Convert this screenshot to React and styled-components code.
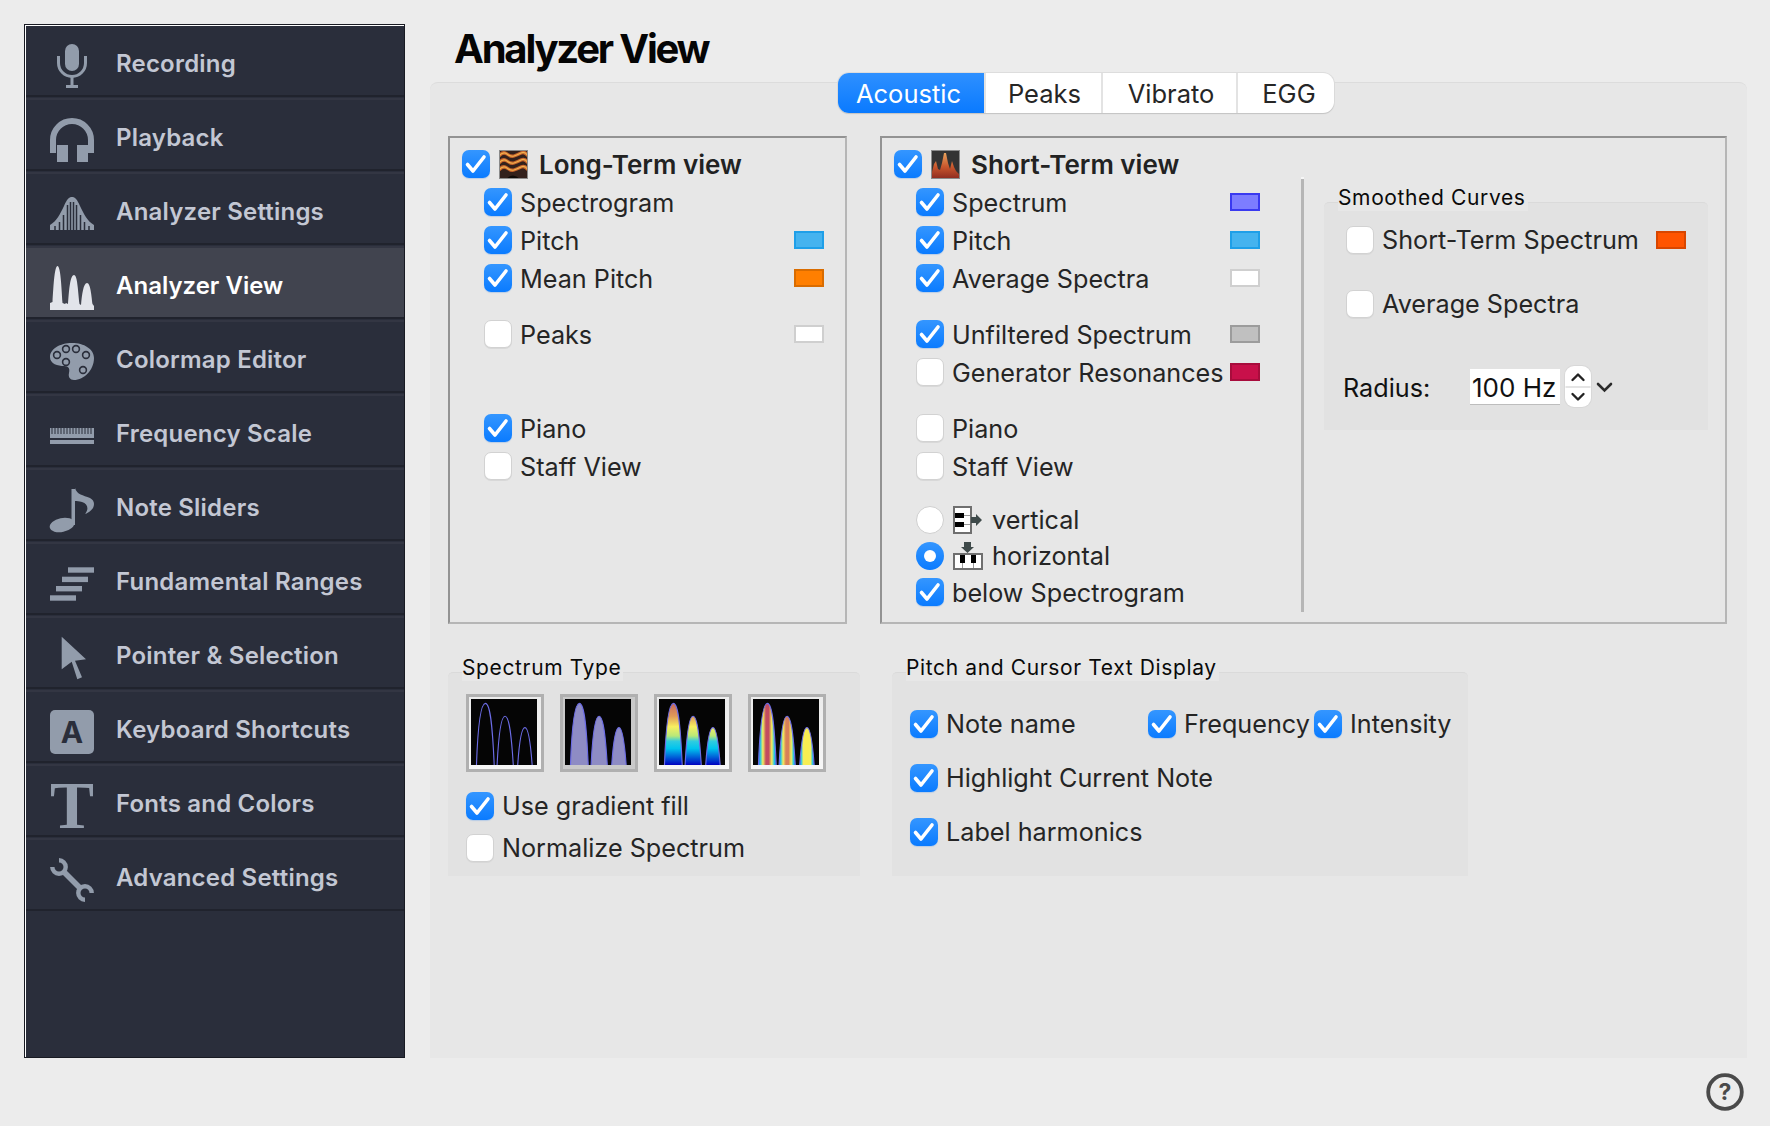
import React from "react";
import styled, { createGlobalStyle } from "styled-components";

const GlobalStyle = createGlobalStyle`
  html, body {
    margin: 0;
    padding: 0;
    background: #ececec;
  }
  body {
    font-family: "Inter", "Liberation Sans", sans-serif;
    color: #232323;
  }
`;

const MicIcon = () => (
  <svg viewBox="0 0 44 44">
    <rect x="15" y="0" width="14" height="27" rx="7" />
    <path d="M8.5 12v7a13.5 13.5 0 0 0 27 0v-7" fill="none" stroke="currentColor" strokeWidth="3" />
    <rect x="20.5" y="32" width="3" height="9" />
    <rect x="16" y="41" width="12" height="3" />
  </svg>
);

const HeadphonesIcon = () => (
  <svg viewBox="0 0 44 44">
    <path d="M3 35V22a19 19 0 0 1 38 0v13" fill="none" stroke="currentColor" strokeWidth="6" />
    <rect x="7" y="27" width="11" height="17" />
    <rect x="27" y="27" width="11" height="17" />
  </svg>
);

const BellIcon = () => (
  <svg viewBox="0 0 44 44">
    <path d="M0 38V33C7 29 10 22 14 14C17 7 19 5 22 5C25 5 27 7 30 14C34 22 37 29 44 33V38Z" />
    <path
      d="M17.5 13V38M20.5 10V38M23.5 10V38M26.5 13V38M13.500 23V38M30.500 23V38M9.500 30V38M34.500 30V38M5 34V38M39 34V38"
      fill="none"
      stroke="#2a2e3b"
      strokeWidth="1.5"
    />
  </svg>
);

const PeaksIcon = () => (
  <svg viewBox="0 0 44 44">
    <path d="M0 44V37L2.500 36C3.500 20 4.500 0 7.500 0C10.500 0 11.500 20 12.500 37L15 38L16 37L18 38C19 25 20 9 24 9C27.500 9 28 25 29.500 38L31 39C32 28 33.500 17 37 17C40.500 17 41.500 30 42.500 38L44 40V44Z" />
  </svg>
);

const PaletteIcon = () => (
  <svg viewBox="0 0 44 44">
    <path d="M22 3C10 3 0 9 0 17C0 24 8 26 14 26C19 26 20 29 19 33C18 37 20 40 24 40C34 40 44 30 44 18C44 9 34 3 22 3Z" />
    {[
      [7, 15],
      [16, 9],
      [26, 9],
      [36, 15],
      [16, 22],
      [33, 30],
    ].map(([cx, cy]) => (
      <circle key={cx + "-" + cy} cx={cx} cy={cy} r="3.4" stroke="#2a2e3b" strokeWidth="1.6" />
    ))}
  </svg>
);

const RulerIcon = () => (
  <svg viewBox="0 0 44 44">
    <rect x="0" y="14" width="44" height="10" />
    <rect x="0" y="26" width="44" height="4" />
    <path
      d="M2 14V20M5 14V20M8 14V20M11 14V20M14 14V20M17 14V20M20 14V20M23 14V20M26 14V20M29 14V20M32 14V20M35 14V20M38 14V20M41 14V20"
      fill="none"
      stroke="#2a2e3b"
      strokeWidth="1"
    />
  </svg>
);

const NoteIcon = () => (
  <svg viewBox="0 0 44 44">
    <ellipse cx="12" cy="37" rx="12.5" ry="7" transform="rotate(-12 12 37)" />
    <rect x="21.5" y="1" width="3.5" height="36" />
    <path d="M25 0C27 7 33 7 40 10C44 12 45 16 43 20C41 23 38 25 35 26C39 21 38 16 32 14C29 13 27 13 25 13Z" />
  </svg>
);

const RangesIcon = () => (
  <svg viewBox="0 0 44 44">
    <rect x="18" y="5.3" width="26" height="5.4" />
    <rect x="12" y="14.7" width="26" height="5.4" />
    <rect x="6" y="24" width="26" height="5.4" />
    <rect x="0" y="33.3" width="26" height="5.4" />
  </svg>
);

const PointerIcon = () => (
  <svg viewBox="0 0 44 44">
    <polygon points="11.7,0.7 11.7,33.3 21.7,25.7 27.3,43.3 32,41.3 25,24.7 36,23.3" />
  </svg>
);

const KeyIcon = () => (
  <svg viewBox="0 0 44 44">
    <rect width="44" height="44" rx="5" />
    <text x="22" y="33" textAnchor="middle" fontFamily="Inter" fontWeight="700" fontSize="30" fill="#2a2e3b">
      A
    </text>
  </svg>
);

const SerifIcon = () => (
  <svg viewBox="0 0 44 44">
    <text x="22" y="44" textAnchor="middle" fontFamily="Liberation Serif" fontWeight="700" fontSize="67" textLength="44" lengthAdjust="spacingAndGlyphs">
      T
    </text>
  </svg>
);

const WrenchIcon = () => (
  <svg viewBox="0 0 44 44" stroke="currentColor" strokeWidth="4.4">
    <path d="M9 2.300A6.700 6.700 0 1 1 2.300 9" fill="none" />
    <path d="M14.500 14.500L29.500 29.500" fill="none" strokeWidth="5.600" />
    <path d="M35 41.700A6.700 6.700 0 1 1 41.700 35" fill="none" />
  </svg>
);

const navItems = [
  { label: "Recording", Icon: MicIcon },
  { label: "Playback", Icon: HeadphonesIcon },
  { label: "Analyzer Settings", Icon: BellIcon },
  { label: "Analyzer View", Icon: PeaksIcon, active: true },
  { label: "Colormap Editor", Icon: PaletteIcon },
  { label: "Frequency Scale", Icon: RulerIcon },
  { label: "Note Sliders", Icon: NoteIcon },
  { label: "Fundamental Ranges", Icon: RangesIcon },
  { label: "Pointer & Selection", Icon: PointerIcon },
  { label: "Keyboard Shortcuts", Icon: KeyIcon },
  { label: "Fonts and Colors", Icon: SerifIcon },
  { label: "Advanced Settings", Icon: WrenchIcon },
];

const peakPaths = [
  "M5.3 64C6.5 30 9 4.3 14 4.3C19 4.3 21 30 22.5 64",
  "M25.3 64C26.5 40 28.5 16.7 33 16.7C37.5 16.7 39.5 40 41 64",
  "M45.3 64C46.5 46 48.5 27.7 52.3 27.7C56 27.7 58 46 59.3 64",
];

const edgeStops = (core) => (
  <>
    <stop offset="0" stopColor="#2f6fe0" />
    <stop offset="0.1" stopColor="#22c4ea" />
    <stop offset="0.25" stopColor="#f5ee5c" />
    <stop offset="0.42" stopColor={core} />
    <stop offset="0.58" stopColor={core} />
    <stop offset="0.75" stopColor="#f5ee5c" />
    <stop offset="0.9" stopColor="#22c4ea" />
    <stop offset="1" stopColor="#2f6fe0" />
  </>
);

const Thumb = ({ kind }) => (
  <ThumbSvg viewBox="0 0 64 64">
    <defs>
      <linearGradient id="jet" gradientUnits="userSpaceOnUse" x1="0" y1="64" x2="0" y2="0">
        <stop offset="0" stopColor="#0000c0" />
        <stop offset="0.12" stopColor="#0060d8" />
        <stop offset="0.25" stopColor="#00c4ee" />
        <stop offset="0.36" stopColor="#30cce0" />
        <stop offset="0.44" stopColor="#b8e878" />
        <stop offset="0.58" stopColor="#f8f060" />
        <stop offset="0.74" stopColor="#e09a58" />
        <stop offset="1" stopColor="#c05860" />
      </linearGradient>
      <linearGradient id="core0">{edgeStops("#c24c60")}</linearGradient>
      <linearGradient id="core1">{edgeStops("#d88058")}</linearGradient>
      <linearGradient id="core2">{edgeStops("#f8ee50")}</linearGradient>
    </defs>
    <rect width="64" height="64" fill="#050505" />
    {peakPaths.map((d, i) => {
      const fills = {
        line: "none",
        solid: "#8e8cc4",
        jet: "url(#jet)",
        core: `url(#core${i})`,
      };
      return <path key={d} d={d} fill={fills[kind]} stroke="#6c6ce6" strokeWidth="1.1" />;
    })}
  </ThumbSvg>
);

const Check = ({ on }) => (
  <CheckBox $on={on}>
    {on && (
      <svg viewBox="0 0 28 28" fill="none" stroke="#fff" strokeWidth="3.6" strokeLinecap="round" strokeLinejoin="round">
        <path d="M5.5 14.5L11 21L22 7" />
      </svg>
    )}
  </CheckBox>
);

const Option = ({ on, text, swatch, $top, indent = true }) => (
  <Row $top={$top} $indent={indent}>
    <Check on={on} />
    <RowText $nudge={indent}>{text}</RowText>
    {swatch && <Swatch $fill={swatch[0]} $edge={swatch[1]} />}
  </Row>
);

const App = () => (
  <Page>
    <GlobalStyle />
    <Sidebar>
      {navItems.map(({ label, Icon, active }, i) => (
        <NavItem key={label} $active={active} $first={i === 0}>
          <NavIcon $active={active}>
            <Icon />
          </NavIcon>
          <NavLabel $active={active}>{label}</NavLabel>
        </NavItem>
      ))}
    </Sidebar>

    <Content>
      <Title>Analyzer View</Title>
      <Panel>
        <Tabs>
          <Tab $active $w={146} $shift={-5}>Acoustic</Tab>
          <Tab $w={117} $shift={2}>Peaks</Tab>
          <Tab $w={135} $shift={3}>Vibrato</Tab>
          <Tab $w={98} $shift={6}>EGG</Tab>
        </Tabs>

        <TopRow>
          <Box>
            <ViewColumn>
              <HeadRow>
                <Check on />
                <HeadIcon viewBox="0 0 29 29">
                  <rect width="29" height="29" fill="#33211c" />
                  <path
                    d="M0 6Q4 1 8 4T15 6T22 3T29 6M0 13Q4 8 8 11T15 13T22 10T29 13M0 20Q4 15 8 18T15 20T22 17T29 20"
                    fill="none"
                    stroke="#c8642c"
                    strokeWidth="3.400"
                  />
                  <path
                    d="M0 6Q4 1 8 4T15 6T22 3T29 6M0 13Q4 8 8 11T15 13T22 10T29 13M0 20Q4 15 8 18T15 20T22 17T29 20"
                    fill="none"
                    stroke="#efb24e"
                    strokeWidth="1.200"
                  />
                  <path d="M7 29Q14 22 21 29Z" fill="#0e0a08" />
                  <rect x="0.5" y="0.5" width="28" height="28" fill="none" stroke="#8a8a8a" />
                </HeadIcon>
                <HeadText>Long-Term view</HeadText>
              </HeadRow>
              <Option on text="Spectrogram" />
              <Option on text="Pitch" swatch={["#45b3ef", "#1f9fe8"]} />
              <Option on text="Mean Pitch" swatch={["#ff7f00", "#d96c00"]} />
              <Option text="Peaks" $top={28} swatch={["#ffffff", "#cfcfcf"]} />
              <Option on text="Piano" $top={66} />
              <Option text="Staff View" />
            </ViewColumn>
          </Box>

          <WideBox>
            <ShortColumn>
              <HeadRow>
                <Check on />
                <HeadIcon viewBox="0 0 29 29">
                  <defs>
                    <linearGradient id="shortPeak" gradientUnits="userSpaceOnUse" x1="0" y1="29" x2="0" y2="2">
                      <stop offset="0" stopColor="#8c2a20" />
                      <stop offset="0.45" stopColor="#c8562c" />
                      <stop offset="1" stopColor="#eaa860" />
                    </linearGradient>
                  </defs>
                  <rect width="29" height="29" fill="#333333" />
                  <path d="M1 29V22L3 14L5 11L7 19L9 20L11 13L13 3H15L17 13L19 19L21 11L23 17L25 21L28 24V29Z" fill="url(#shortPeak)" />
                  <rect x="0.5" y="0.5" width="28" height="28" fill="none" stroke="#8a8a8a" />
                </HeadIcon>
                <HeadText>Short-Term view</HeadText>
              </HeadRow>
              <Option on text="Spectrum" swatch={["#7d7dff", "#3a3af0"]} />
              <Option on text="Pitch" swatch={["#45b3ef", "#1f9fe8"]} />
              <Option on text="Average Spectra" swatch={["#ffffff", "#cfcfcf"]} />
              <Option on text="Unfiltered Spectrum" $top={28} swatch={["#c0c0c0", "#9c9c9c"]} />
              <Option text="Generator Resonances" swatch={["#c8104a", "#a80c3c"]} />
              <Option text="Piano" $top={28} />
              <Option text="Staff View" />
              <Row $top={26} $indent>
                <Radio />
                <PianoIcon viewBox="0 0 30 28">
                  <rect x="1" y="1" width="17" height="26" fill="#fff" stroke="#6f6f6f" strokeWidth="2" />
                  <path d="M2 9.5H17M2 18.5H17" stroke="#9a9a9a" />
                  <rect x="2" y="7" width="9" height="5" fill="#000" />
                  <rect x="2" y="16" width="9" height="5" fill="#000" />
                  <path d="M18 11H23V8L29 14L23 20V17H18Z" fill="#3f4a4a" />
                </PianoIcon>
                <PianoText>vertical</PianoText>
              </Row>
              <Row $top={8} $indent>
                <Radio $on />
                <PianoIcon viewBox="0 0 30 28">
                  <rect x="1" y="12" width="28" height="15" fill="#fff" stroke="#6f6f6f" strokeWidth="2" />
                  <path d="M9.5 13V26M20.5 13V26" stroke="#9a9a9a" />
                  <rect x="7" y="13" width="5" height="8" fill="#000" />
                  <rect x="18" y="13" width="5" height="8" fill="#000" />
                  <path d="M11 0H18V5H21L14.500 11L8 5H11Z" fill="#3f4a4a" />
                </PianoIcon>
                <PianoText>horizontal</PianoText>
              </Row>
              <Option on text="below Spectrogram" $top={8} />
            </ShortColumn>
            <Divider />
            <SmoothedGroup>
              <Legend>Smoothed Curves</Legend>
              <Option text="Short-Term Spectrum" indent={false} $top={0} swatch={["#ff5400", "#d84600"]} />
              <Option text="Average Spectra" indent={false} $top={36} />
              <RadiusRow>
                <RadiusLabel>Radius:</RadiusLabel>
                <RadiusInput>100 Hz</RadiusInput>
                <Stepper>
                  <svg viewBox="0 0 26 41" fill="none" stroke="#222" strokeWidth="2.4" strokeLinecap="round" strokeLinejoin="round">
                    <path d="M7.500 14L13 8.500L18.500 14" />
                    <path d="M7.500 28L13 33.500L18.500 28" />
                    <path d="M1 21H25" stroke="#dcdcdc" strokeWidth="1.500" />
                  </svg>
                </Stepper>
                <Chevron viewBox="0 0 17 12">
                  <path d="M2 3L8.500 9.500L15 3" fill="none" stroke="#2b2b2b" strokeWidth="2.600" strokeLinecap="round" />
                </Chevron>
              </RadiusRow>
            </SmoothedGroup>
          </WideBox>
        </TopRow>

        <BottomRow>
          <TypeGroup>
            <Legend>Spectrum Type</Legend>
            <ThumbRow>
              {["line", "solid", "jet", "core"].map((kind) => (
                <ThumbButton key={kind} $selected={kind === "solid"}>
                  <Thumb kind={kind} />
                </ThumbButton>
              ))}
            </ThumbRow>
            <Option on text="Use gradient fill" indent={false} $top={20} />
            <Option text="Normalize Spectrum" indent={false} $top={14} />
          </TypeGroup>

          <CursorGroup>
            <Legend>Pitch and Cursor Text Display</Legend>
            <CursorGrid>
              <Option on text="Note name" indent={false} $top={0} />
              <Option on text="Frequency" indent={false} $top={0} />
              <Option on text="Intensity" indent={false} $top={0} />
            </CursorGrid>
            <Option on text="Highlight Current Note" indent={false} $top={26} />
            <Option on text="Label harmonics" indent={false} $top={26} />
          </CursorGroup>
        </BottomRow>
      </Panel>
      <HelpRow>
        <HelpIcon viewBox="0 0 38 38">
          <circle cx="19" cy="19" r="16.800" fill="none" stroke="#4a4a4a" strokeWidth="3.800" />
          <text x="19" y="27" textAnchor="middle" fontFamily="Inter" fontWeight="700" fontSize="23" fill="#4a4a4a">
            ?
          </text>
        </HelpIcon>
      </HelpRow>
    </Content>
  </Page>
);

export default App;

const Page = styled.div`
  width: 1770px;
  height: 1126px;
  box-sizing: border-box;
  display: flex;
  align-items: flex-start;
  gap: 25px;
  padding: 24px 23px 0 24px;
  overflow: hidden;
`;

const Sidebar = styled.nav`
  width: 381px;
  height: 1034px;
  flex: none;
  box-sizing: border-box;
  border: 1px solid #181a22;
  padding-left: 1px;
  background: #2a2e3b;
  box-shadow: inset 1px 1px 0 #fff;
`;

const NavItem = styled.div`
  height: 51px;
  display: flex;
  align-items: flex-start;
  gap: 23px;
  padding: 18px 0 0 24px;
  border-top: ${(p) => (p.$first ? "1px solid transparent" : "2px solid #333643")};
  border-bottom: 2px solid #20232d;
  margin-bottom: 1px;
  background: ${(p) => (p.$active ? "#41444f" : "transparent")};
  background-clip: padding-box;
`;

const NavIcon = styled.div`
  width: 44px;
  height: 44px;
  flex: none;
  color: ${(p) => (p.$active ? "#e2e4ea" : "#929cab")};

  svg {
    display: block;
    width: 44px;
    height: 44px;
    fill: currentColor;
    overflow: visible;
  }
`;

const NavLabel = styled.span`
  margin: 5px 0 0 -1px;
  font-size: 24px;
  line-height: 30px;
  font-weight: 600;
  letter-spacing: ${(p) => (p.$active ? "0" : "0.2px")};
  color: ${(p) => (p.$active ? "#fff" : "#c3c7d3")};
  white-space: nowrap;
`;

const Content = styled.main`
  flex: 1;
  min-width: 0;
  display: flex;
  flex-direction: column;
`;

const Title = styled.h1`
  height: 55px;
  margin: 0;
  padding: 3px 0 0 24px;
  font-size: 40px;
  line-height: 44px;
  font-weight: 700;
  letter-spacing: -2.2px;
  color: #050505;
`;

const Panel = styled.section`
  height: 976px;
  box-sizing: border-box;
  padding: 0 20px 0 18px;
  background: #e7e7e7;
  border-top: 1px solid #dcdcdc;
  border-radius: 8px 8px 0 0;
`;

const Tabs = styled.div`
  width: fit-content;
  height: 40px;
  box-sizing: border-box;
  display: flex;
  margin: -10px 0 0 390px;
  background: #fff;
  border-radius: 11px;
  box-shadow: 0 1px 1px #c4c4c4, 0 0 0 1px #dddddd;
  overflow: hidden;
`;

const Tab = styled.div`
  width: ${(p) => p.$w}px;
  box-sizing: border-box;
  display: flex;
  align-items: center;
  justify-content: center;
  padding: 0 ${(p) => (p.$shift < 0 ? -p.$shift : 0)}px 0 ${(p) => (p.$shift > 0 ? p.$shift : 0)}px;
  font-size: 25.5px;
  color: ${(p) => (p.$active ? "#fff" : "#262626")};
  background: ${(p) => (p.$active ? "linear-gradient(#2e90ff, #0a7aff)" : "transparent")};

  & + & {
    border-left: 2px solid #e3e3e3;
  }
  &:nth-child(2) {
    border-left: none;
  }
`;

const TopRow = styled.div`
  display: flex;
  gap: 33px;
  margin-top: 23px;
`;

const Box = styled.div`
  width: 399px;
  height: 488px;
  box-sizing: border-box;
  border-style: solid;
  border-width: 2px;
  border-color: #939393 #b6b6b6 #b6b6b6 #939393;
`;

const WideBox = styled(Box)`
  width: 847px;
  display: flex;
`;

const ViewColumn = styled.div`
  padding: 12px 21px 0 12px;
`;

const ShortColumn = styled.div`
  width: 419px;
  flex: none;
  box-sizing: border-box;
  padding: 12px 41px 0 12px;
`;

const Divider = styled.div`
  width: 3px;
  height: 435px;
  flex: none;
  margin-top: 39px;
  background: #b6b6b6;
  box-shadow: inset 0 2px 0 #f6f6f6;
`;

const HeadRow = styled.div`
  height: 28px;
  display: flex;
  align-items: center;
`;

const HeadIcon = styled.svg`
  width: 29px;
  height: 29px;
  margin-left: 9px;
  flex: none;
`;

const HeadText = styled.span`
  margin-left: 11px;
  font-size: 26px;
  font-weight: 600;
  color: #222;
  white-space: nowrap;
`;

const Row = styled.div`
  height: 28px;
  display: flex;
  align-items: center;
  margin-top: ${(p) => (p.$top === undefined ? 10 : p.$top)}px;
  margin-left: ${(p) => (p.$indent ? 22 : 0)}px;
`;

const RowText = styled.span`
  margin-left: 8px;
  padding-top: ${(p) => (p.$nudge ? 2 : 0)}px;
  font-size: 25.2px;
  color: #252525;
  white-space: nowrap;
`;

const CheckBox = styled.span`
  width: 28px;
  height: 28px;
  flex: none;
  box-sizing: border-box;
  display: block;
  border-radius: 7px;
  background: ${(p) => (p.$on ? "linear-gradient(#3496ff, #0a7bff)" : "#fff")};
  border: ${(p) => (p.$on ? "none" : "1px solid #d2d2d2")};
  box-shadow: ${(p) => (p.$on ? "0 1px 1px #b9cde6" : "0 1px 0 #d8d8d8")};

  svg {
    display: block;
    width: 28px;
    height: 28px;
  }
`;

const Radio = styled.span`
  width: 28px;
  height: 28px;
  flex: none;
  box-sizing: border-box;
  position: relative;
  border-radius: 50%;
  background: ${(p) => (p.$on ? "linear-gradient(#3496ff, #0a7bff)" : "#fff")};
  border: ${(p) => (p.$on ? "none" : "1px solid #cfcfcf")};

  &::after {
    content: "";
    display: ${(p) => (p.$on ? "block" : "none")};
    position: absolute;
    left: 8px;
    top: 8px;
    width: 12px;
    height: 12px;
    border-radius: 50%;
    background: #fff;
  }
`;

const PianoIcon = styled.svg`
  width: 30px;
  height: 28px;
  flex: none;
  margin-left: 9px;
  overflow: visible;
`;

const PianoText = styled.span`
  margin-left: 9px;
  font-size: 25.2px;
  color: #252525;
`;

const Swatch = styled.span`
  width: 30px;
  height: 18px;
  flex: none;
  box-sizing: border-box;
  margin-left: auto;
  background: ${(p) => p.$fill};
  border: 2px solid ${(p) => p.$edge};
`;

const Group = styled.div`
  position: relative;
  box-sizing: border-box;
  background: #e2e2e2;
  border-top: 1px solid #dadada;
  border-radius: 5px 5px 0 0;
`;

const Legend = styled.span`
  position: absolute;
  left: 14px;
  top: -19px;
  height: 27px;
  line-height: 27px;
  padding-right: 2px;
  background: #e7e7e7;
  font-size: 21px;
  letter-spacing: 0.63px;
  color: #0a0a0a;
  white-space: nowrap;
`;

const SmoothedGroup = styled(Group)`
  width: 384px;
  height: 228px;
  flex: none;
  margin: 64px 0 0 20px;
  padding: 23px 22px 0 22px;
`;

const RadiusRow = styled.div`
  display: flex;
  align-items: center;
  height: 41px;
  margin: 48px 0 0 -3px;
`;

const RadiusLabel = styled.span`
  width: 127px;
  padding-top: 2px;
  font-size: 25.2px;
  color: #111;
`;

const RadiusInput = styled.span`
  width: 90px;
  height: 35px;
  box-sizing: border-box;
  padding: 1px 0 0 2px;
  margin-right: 5px;
  background: #fff;
  box-shadow: 0 1px 0 #bdbdbd;
  font-size: 26px;
  line-height: 35px;
  color: #111;
`;

const Stepper = styled.span`
  width: 26px;
  height: 41px;
  flex: none;
  box-sizing: border-box;
  background: #fff;
  border-radius: 9px;
  box-shadow: 0 0 0 1px #d8d8d8;

  svg {
    display: block;
    width: 26px;
    height: 41px;
  }
`;

const Chevron = styled.svg`
  width: 17px;
  height: 12px;
  margin-left: 5px;
  flex: none;
`;

const BottomRow = styled.div`
  display: flex;
  gap: 32px;
  margin-top: 48px;
`;

const TypeGroup = styled(Group)`
  width: 412px;
  height: 204px;
  padding: 21px 0 0 18px;
`;

const ThumbRow = styled.div`
  display: flex;
  gap: 16px;
`;

const ThumbButton = styled.div`
  width: 78px;
  height: 78px;
  box-sizing: border-box;
  padding: 3px;
  border: 3px solid #b0b0b0;
  background: ${(p) => (p.$selected ? "#c9c9c9" : "linear-gradient(#ececec, #f6f6f6)")};
`;

const ThumbSvg = styled.svg`
  display: block;
  width: 66px;
  height: 66px;
  margin: -1px;
`;

const CursorGroup = styled(Group)`
  width: 576px;
  height: 204px;
  padding: 37px 0 0 18px;
`;

const CursorGrid = styled.div`
  display: grid;
  grid-template-columns: 238px 166px auto;
`;

const HelpRow = styled.div`
  display: flex;
  justify-content: flex-end;
  padding: 15px 3px 0 0;
`;

const HelpIcon = styled.svg`
  width: 38px;
  height: 38px;
`;
